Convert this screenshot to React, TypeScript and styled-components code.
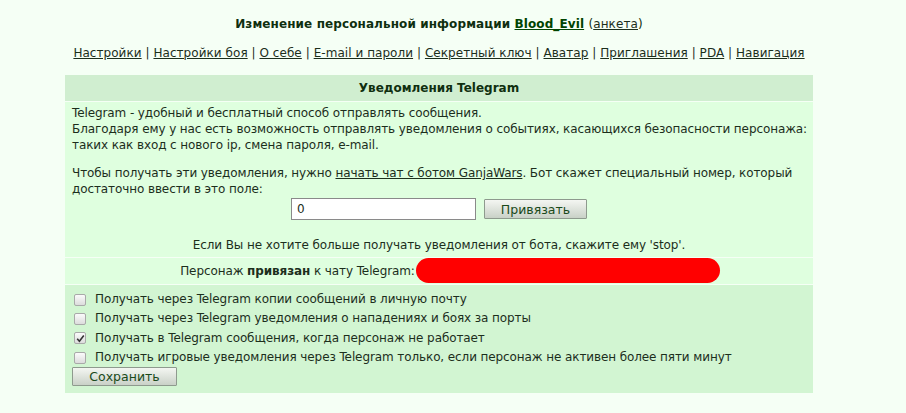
import React from 'react'
import { createGlobalStyle, styled } from 'styled-components'

const GlobalStyle = createGlobalStyle`
  body {
    margin: 0;
    background: #f5fff5;
    font-family: 'DejaVu Sans', Verdana, sans-serif;
    font-size: 12px;
    color: #1c2e1c;
  }
`

const Page = styled.div`
  width: 878px;
  padding-top: 15px;
  text-align: center;
`

const Title = styled.h1`
  margin: 0;
  font-size: 12px;
  font-weight: bold;
  line-height: 18px;
  color: #0f2f0f;
  letter-spacing: 0.1px;

  > span {
    font-weight: normal;
  }
`

const ProfileLink = styled.a`
  color: #004400;
  text-decoration: underline;
`

const PlainLink = styled.a`
  color: #1c2e1c;
  text-decoration: underline;
  font-weight: normal;
`

const Nav = styled.nav`
  margin-top: 11px;
  line-height: 18px;
  letter-spacing: 0.05px;
`

const Panel = styled.div`
  width: 748px;
  margin: 13px auto 0;
  display: flex;
  flex-direction: column;
  gap: 1px;
  text-align: left;
`

const Header = styled.div`
  height: 26px;
  line-height: 26px;
  background: #d0eed0;
  text-align: center;
  font-weight: bold;
  color: #0f2f0f;
`

const Row = styled.div<{ $tone?: 'light' | 'mid'; $center?: boolean }>`
  background: ${(p) => (p.$tone === 'mid' ? '#d2f5d2' : '#dfffdf')};
  text-align: ${(p) => (p.$center ? 'center' : 'left')};
  line-height: 16px;
  padding: 3px 2px 4px 7px;
  letter-spacing: -0.1px;
`

const Para = styled.p<{ $last?: boolean }>`
  margin: 0 0 ${(p) => (p.$last ? 0 : 12)}px;
`

const BindForm = styled.div`
  display: flex;
  justify-content: center;
  align-items: center;
  gap: 8px;
  margin: 1px 5px 17px 0;
`

const TextInput = styled.input`
  box-sizing: border-box;
  width: 185px;
  height: 22px;
  padding: 0 5px;
  border: 1px solid #8a8a8a;
  background: #fff;
  font-family: inherit;
  font-size: 12px;
  color: #1c2e1c;
`

const Button = styled.button<{ $width: number }>`
  box-sizing: border-box;
  width: ${(p) => p.$width}px;
  height: 20px;
  padding: 0;
  border: 1px solid #8e9a8e;
  border-radius: 1px;
  background: linear-gradient(#f4f6f2, #c9d1c7);
  font-family: inherit;
  font-size: 12.5px;
  color: #1a4a1a;
`

const Notice = styled.div`
  text-align: center;
  margin-right: 5px;
`

const Hidden = styled.span`
  display: inline-block;
  width: 304px;
  height: 25px;
  margin: -6px 0 -4px 1px;
  vertical-align: middle;
  border-radius: 13px;
  background: #ff0000;
`

const BoundRow = styled(Row)`
  padding: 5px 7px 5px 29px;
`

const Options = styled(Row)`
  padding: 5px 7px 6px;
  line-height: 19.3px;
`

const Option = styled.label`
  display: flex;
  align-items: center;
  gap: 9px;
  padding-left: 2px;
`

const Box = styled.span`
  box-sizing: border-box;
  width: 12px;
  height: 12px;
  border: 1px solid #a9a9a9;
  border-radius: 2px;
  background: linear-gradient(#fbfbfb, #dcdcdc);
  display: flex;
  align-items: center;
  justify-content: center;
`

const SaveButton = styled(Button)`
  height: 19px;
`

const navItems = [
  'Настройки',
  'Настройки боя',
  'О себе',
  'E-mail и пароли',
  'Секретный ключ',
  'Аватар',
  'Приглашения',
  'PDA',
  'Навигация',
]

const options = [
  { text: 'Получать через Telegram копии сообщений в личную почту', checked: false },
  { text: 'Получать через Telegram уведомления о нападениях и боях за порты', checked: false },
  { text: 'Получать в Telegram сообщения, когда персонаж не работает', checked: true },
  { text: 'Получать игровые уведомления через Telegram только, если персонаж не активен более пяти минут', checked: false },
]

const Check = () => (
  <svg width="9" height="9" viewBox="0 0 9 9">
    <path d="M1.2 4.8 L3.4 7.2 L7.8 1.4" fill="none" stroke="#333" strokeWidth="1.6" />
  </svg>
)

export default function App() {
  return (
    <>
      <GlobalStyle />
      <Page>
        <Title>
          Изменение персональной информации <ProfileLink href="#">Blood_Evil</ProfileLink>{' '}
          <span>
            (<PlainLink href="#">анкета</PlainLink>)
          </span>
        </Title>
        <Nav>
          {navItems.map((item, i) => (
            <React.Fragment key={item}>
              {i > 0 && ' | '}
              <PlainLink href="#">{item}</PlainLink>
            </React.Fragment>
          ))}
        </Nav>
        <Panel>
          <Header>Уведомления Telegram</Header>
          <Row>
            <Para>
              Telegram - удобный и бесплатный способ отправлять сообщения.
              <br />
              Благодаря ему у нас есть возможность отправлять уведомления о событиях, касающихся безопасности
              персонажа: таких как вход с нового ip, смена пароля, e-mail.
            </Para>
            <Para $last>
              Чтобы получать эти уведомления, нужно <PlainLink href="#">начать чат с ботом GanjaWars</PlainLink>.
              Бот скажет специальный номер, который достаточно ввести в это поле:
            </Para>
            <BindForm>
              <TextInput defaultValue="0" />
              <Button $width={103}>Привязать</Button>
            </BindForm>
            <Notice>Если Вы не хотите больше получать уведомления от бота, скажите ему 'stop'.</Notice>
          </Row>
          <BoundRow $center>
            Персонаж <b>привязан</b> к чату Telegram:
            <Hidden />
          </BoundRow>
          <Options $tone="mid">
            {options.map((o) => (
              <Option key={o.text}>
                <Box>{o.checked && <Check />}</Box>
                {o.text}
              </Option>
            ))}
            <SaveButton $width={105}>Сохранить</SaveButton>
          </Options>
        </Panel>
      </Page>
    </>
  )
}
